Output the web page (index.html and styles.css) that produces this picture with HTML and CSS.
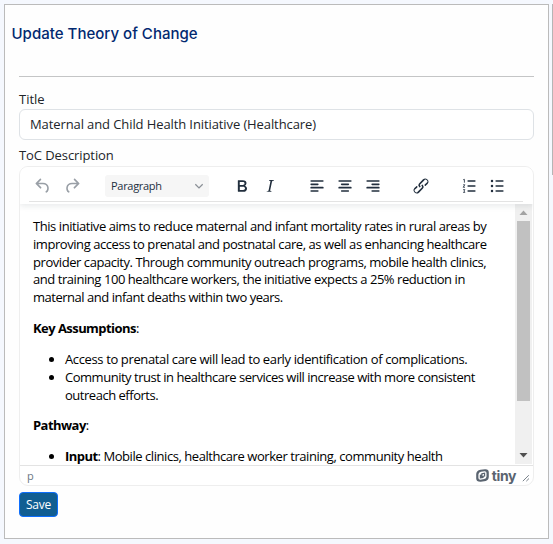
FILE: index.html
```html
<!DOCTYPE html>
<html lang="en">
<head>
<meta charset="utf-8">
<title>Update Theory of Change</title>
<link rel="stylesheet" href="styles.css">
</head>
<body>
<main class="card">
  <h1 class="heading">Update Theory of Change</h1>
  <hr class="rule">
  <form class="form">
    <label class="label title-label">Title</label>
    <div class="input">Maternal and Child Health Initiative (Healthcare)</div>
    <label class="label desc-label">ToC Description</label>
    <section class="editor">
      <header class="toolbar">
        <div class="tools">
          <div class="group history">
            <span class="tool"><svg viewBox="0 0 24 24"><path d="M6.4 8H12c3.7 0 6.2 2 6.8 5.1.6 2.7-.4 5.6-2.3 6.8a1 1 0 0 1-1-1.8c1.1-.6 1.8-2.7 1.4-4.6-.5-2.1-2.1-3.5-4.9-3.5H6.4l3.3 3.3a1 1 0 1 1-1.4 1.4l-5-5a1 1 0 0 1 0-1.4l5-5a1 1 0 0 1 1.4 1.4L6.4 8Z"/></svg></span>
            <span class="tool"><svg viewBox="0 0 24 24"><path transform="translate(24 0) scale(-1 1)" d="M6.4 8H12c3.7 0 6.2 2 6.8 5.1.6 2.7-.4 5.6-2.3 6.8a1 1 0 0 1-1-1.8c1.1-.6 1.8-2.7 1.4-4.6-.5-2.1-2.1-3.5-4.9-3.5H6.4l3.3 3.3a1 1 0 1 1-1.4 1.4l-5-5a1 1 0 0 1 0-1.4l5-5a1 1 0 0 1 1.4 1.4L6.4 8Z"/></svg></span>
          </div>
          <div class="select"><span class="select-text">Paragraph</span><svg viewBox="0 0 10 10"><path d="M1.3 3.2 5 6.9l3.7-3.7" fill="none" stroke="#8b9097" stroke-width="1.3"/></svg></div>
          <div class="group style">
            <span class="tool"><svg viewBox="0 0 24 24"><path d="M7.8 19c-.3 0-.5 0-.6-.2l-.2-.5V5.7c0-.2 0-.4.2-.5l.6-.2h5c1.5 0 2.7.3 3.5 1 .7.6 1.1 1.4 1.1 2.5a3 3 0 0 1-.6 1.9c-.4.6-1 1-1.6 1.2.4.1.9.3 1.3.6s.8.7 1 1.2c.4.4.5 1 .5 1.6 0 1.3-.4 2.3-1.3 3-.8.7-2.1 1-3.8 1H7.8Zm5-8.3c.6 0 1.2-.1 1.6-.5.4-.3.6-.7.6-1.3 0-1.1-.8-1.7-2.3-1.7H9.3v3.5h3.4Zm.5 6c.7 0 1.3-.1 1.7-.4.4-.4.6-.9.6-1.5s-.2-1-.7-1.4c-.4-.3-1-.4-2-.4H9.4v3.8h4Z"/></svg></span>
            <span class="tool"><svg viewBox="0 0 24 24"><path d="m16.7 4.7-.1.9h-.3c-.6 0-1 0-1.4.3-.3.3-.4.6-.5 1.1l-2.1 9.8v.6c0 .5.4.8 1.4.8h.2l-.2.8H8l.2-.8h.2c1.1 0 1.8-.5 2-1.5l2-9.8.1-.5c0-.6-.4-.8-1.4-.8h-.3l.2-.9h5.8Z"/></svg></span>
          </div>
          <div class="group align">
            <span class="tool"><svg viewBox="0 0 24 24"><path d="M5 6h14M5 10h8M5 14h14M5 18h8" class="lines"/></svg></span>
            <span class="tool"><svg viewBox="0 0 24 24"><path d="M5 6h14M8 10h8M5 14h14M8 18h8" class="lines"/></svg></span>
            <span class="tool"><svg viewBox="0 0 24 24"><path d="M5 6h14M11 10h8M5 14h14M11 18h8" class="lines"/></svg></span>
          </div>
          <div class="group link">
            <span class="tool"><svg viewBox="0 0 24 24"><path d="M6.2 12.3a1 1 0 0 1 1.4 1.4l-2 2a2 2 0 1 0 2.6 2.8l4.8-4.8a1 1 0 0 0 0-1.4 1 1 0 1 1 1.4-1.3 2.9 2.9 0 0 1 0 4L9.6 20a3.9 3.9 0 0 1-5.5-5.5l2-2Zm11.6-.6a1 1 0 0 1-1.4-1.4l2-2a2 2 0 1 0-2.6-2.8L11 10.3a1 1 0 0 0 0 1.4A1 1 0 1 1 9.6 13a2.9 2.9 0 0 1 0-4L14.4 4a3.9 3.9 0 0 1 5.5 5.5l-2 2Z"/></svg></span>
          </div>
          <div class="group lists">
            <span class="tool"><svg viewBox="0 0 24 24"><path d="M11 6h8M11 12h8M11 18h8" class="lines"/><path d="M5 4.5 6.5 4v4M5 10.5h2L5 13.5h2.2M5 16.3h2L6 18l1 1.7H5" class="thin"/></svg></span>
            <span class="tool"><svg viewBox="0 0 24 24"><path d="M11 6h8M11 12h8M11 18h8" class="lines"/><circle cx="6" cy="6" r="1.5"/><circle cx="6" cy="12" r="1.5"/><circle cx="6" cy="18" r="1.5"/></svg></span>
          </div>
        </div>
      </header>
      <div class="body">
        <article class="content">
          <p>This initiative aims to reduce maternal and infant mortality rates in rural areas by<br>improving access to prenatal and postnatal care, as well as enhancing healthcare<br>provider capacity. Through community outreach programs, mobile health clinics,<br>and training 100 healthcare workers, the initiative expects a 25% reduction in<br><span class="tight">maternal and infant deaths within two years.</span></p>
          <p><strong>Key Assumptions</strong>:</p>
          <ul>
            <li class="loose">Access to prenatal care will lead to early identification of complications.</li>
            <li class="tight">Community trust in healthcare services will increase with more consistent<br>outreach efforts.</li>
          </ul>
          <p><strong>Pathway</strong>:</p>
          <ul>
            <li><strong>Input</strong>: Mobile clinics, healthcare worker training, community health</li>
          </ul>
        </article>
        <div class="scrollbar">
          <svg class="arrow" viewBox="0 0 17 17"><path d="M4.5 11h8l-4-4.5z" fill="#a3a3a3"/></svg>
          <div class="thumb"></div>
          <svg class="arrow" viewBox="0 0 17 17"><path d="M4.5 6h8l-4 4.5z" fill="#505050"/></svg>
        </div>
      </div>
      <footer class="status">
        <span class="path">p</span>
        <span class="brand"><svg viewBox="0 0 13 13"><path fill-rule="evenodd" d="M4.5.8 9 .2Q12.8 0 12.8 3.5v4.3Q12.7 11 9.8 12l-5 .8Q.3 13 .2 9.5V5Q.4 1.6 4.5.8ZM4.9 2.8Q2.5 3.2 2.4 5.5v3.6q.1 1.7 2 1.6l3.8-.6q2.2-.5 2.3-2.6V4q0-1.9-2-1.8Z"/><path fill-rule="evenodd" d="M5.3 4.2 9.2 3.6v3.8l-1.6.3v1.2l-3.8.6V5.7l1.5-.3Zm1.2 1v1.7l1.5-.3V4.9Z"/></svg><b>tiny</b></span>
        <svg class="grip" viewBox="0 0 8 8"><path d="M.8 7.2 6.8 1.2M4.3 7.2 7 4.5" stroke="#7a828b" stroke-width="1"/></svg>
      </footer>
    </section>
    <button class="save" type="button">Save</button>
  </form>
</main>
<div class="page-scroll"></div>
</body>
</html>
```
FILE: styles.css
```css
* { box-sizing: border-box; }
body {
  margin: 0;
  height: 544px;
  padding: 4px 0 0 4px;
  display: flex;
  gap: 3px;
  overflow: hidden;
  background: #f5f8fe;
  color: #212529;
  font-family: "Open Sans", sans-serif;
}
.card {
  width: 545px;
  height: 535px;
  flex: none;
  border: 1px solid #bbb;
  background: #fefefe;
}
.page-scroll { width: 1px; height: 171px; background: #b5b5b5; }
.heading {
  margin: 18px 0 0 6.5px;
  font: 500 15px/22px Inter, sans-serif;
  letter-spacing: .02px;
  color: #012970;
}
.rule { margin: 31px 14px 0; border: 0; height: 1px; background: #c4c5c6; }
.form { display: flex; flex-direction: column; align-items: flex-start; padding: 0 14px; }
.label { font-size: 13px; line-height: 20px; white-space: nowrap; }
.title-label { margin-top: 12px; }
.desc-label { margin-top: 5px; margin-bottom: 1px; letter-spacing: -.08px; }
.input {
  width: 100%;
  height: 31px;
  border: 1px solid #dee2e6;
  border-radius: 6px;
  background: #fff;
  padding: 0 10px;
  font-size: 13px;
  line-height: 29px;
  letter-spacing: -.1px;
  white-space: nowrap;
}
.editor {
  width: 100%;
  height: 320px;
  border: 1px solid #eee;
  border-radius: 9px;
  overflow: hidden;
  background: #fff;
}
.toolbar { height: 37px; padding: 0 10px 0 9px; position: relative; z-index: 1; background: #fff; box-shadow: 0 2px 6px rgba(34, 47, 62, .1); }
.tools { height: 35px; display: flex; align-items: center; padding-top: 3px; border-bottom: 1px solid #e3e3e3; }
.group { display: flex; flex: none; }
.history { fill: #999fa6; gap: 1px; }
.style, .align, .link, .lists { fill: #222f3e; }
.tool { width: 28px; height: 24px; display: flex; align-items: center; justify-content: center; }
.tool svg { width: 20px; height: 20px; }
.lines { stroke: #222f3e; stroke-width: 2; stroke-linecap: round; }
.thin { fill: none; stroke: #222f3e; stroke-width: 1; }
.select {
  width: 104px;
  height: 22px;
  margin-left: 19px;
  padding: 0 5px 0 6px;
  display: flex;
  align-items: center;
  justify-content: space-between;
  border-radius: 3px;
  background: #f6f6f6;
  color: #222f3e;
}
.select-text { font-size: 11px; letter-spacing: -.3px; }
.select svg { width: 10px; height: 10px; }
.style { margin-left: 19px; }
.align { margin-left: 19px; }
.link { margin-left: 20px; }
.lists { margin-left: 19.5px; }
.body { height: 261px; display: flex; }
.content {
  flex: 1;
  min-width: 0;
  overflow: hidden;
  padding: 14px 0 0 13px;
  color: #000;
  font-size: 13px;
  line-height: 17.8px;
  white-space: nowrap;
  letter-spacing: -.44px;
}
.tight { letter-spacing: -.48px; }
.loose { letter-spacing: -.37px; }
.content strong { letter-spacing: -.55px; }
.content p { margin: 0 0 13.2px; }
.content ul { margin: 0 0 12.4px; padding-left: 32px; }
.scrollbar { width: 17px; margin: 0 1px 1px 0; display: flex; flex-direction: column; background: #f0f0f0; }
.arrow { width: 17px; height: 17px; }
.thumb { width: 13px; height: 180px; margin: 0 2px 46px; background: #c1c1c1; }
.status { height: 20px; border-top: 1px solid #e3e3e3; padding: 0 3px 0 7px; display: flex; align-items: center; color: #6b7785; }
.path { flex: 1; font-size: 11px; }
.brand { display: flex; align-items: center; gap: 3px; fill: #5a6470; color: #5a6470; }
.brand svg { width: 13px; height: 13px; }
.brand b { font: 700 14px/16px Inter, sans-serif; letter-spacing: -.4px; }
.grip { width: 8px; height: 8px; margin: 5px 0 0 6px; }
.save {
  width: 39px;
  height: 25px;
  margin-top: 6px;
  padding: 0;
  border: 1px solid #0d6efd;
  border-radius: 4px;
  background: #115e92;
  color: #fff;
  font: 12px/22px "Open Sans", sans-serif;
  letter-spacing: -.2px;
}
```
